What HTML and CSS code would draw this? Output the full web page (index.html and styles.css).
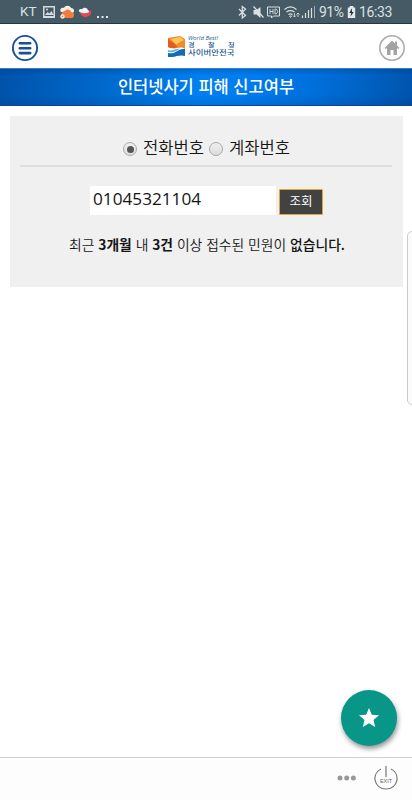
FILE: index.html
```html
<!DOCTYPE html>
<html lang="ko">
<head>
<meta charset="utf-8">
<meta name="viewport" content="width=device-width, initial-scale=1">
<title>인터넷사기 피해 신고여부</title>
<link rel="stylesheet" href="styles.css">
</head>
<body>
<div class="screen">
  <div class="status">
    <span class="carrier">KT</span>
    <svg class="notices" width="90" height="23" viewBox="0 0 90 23">
      <path fill="#d4dce0" fill-rule="evenodd" d="M4 6h12v12H4zM5.500 7.500v8.500h9V7.500zM6 15l2.500-3 2 1.500 2-2.500 2 4z"/>
      <circle cx="8" cy="9.500" r="1" fill="#d4dce0"/>
      <path fill="#f5f0ed" d="M22 12c-2-3 1-5 3-4 1-3 6-3 7 0 3 0 4 3 2 5z"/>
      <path fill="#f37b3d" d="M23 17c-2-4 1-6 3-6 2-3 6-1 6 1 4 0 4 5 1 6h-9z"/>
      <circle cx="23.500" cy="16.500" r="2.200" fill="#e9e7e5"/><circle cx="23.500" cy="16.500" r=".8" fill="#f37b3d"/>
      <path fill="#e64a50" d="M41 13c2-1 4 0 5 0 1-3 4-2 6-2 1 3-2 6-6 6-2 0-4-2-5-4z"/>
      <path fill="#f1f4f5" d="M40 11.500c-1-2 2-3 3-2 1-3 6-2 6 1 2 0 1 2 0 2-2 1-7 1-9-1z"/>
      <path fill="#e6eaec" d="M58 16h2v2h-2zm4.500 0h2v2h-2zm4.500 0h2v2h-2z"/>
    </svg>
    <svg class="signals" width="82" height="23" viewBox="0 0 82 23" fill="none" stroke="#d7e0e4" stroke-width="1.300">
      <path d="M3 9l6.500 6.500-3.200 2.500V6.500L9.500 9 3 15.500"/>
      <path d="M17.500 10h3l4-3v11l-4-3.500h-3z" fill="#d7e0e4" stroke="none"/><path d="M17.500 6.500l10 11"/>
      <path d="M31.500 7h12v9h-6L35.500 18v-2h-4z" stroke-width="1"/>
      <path d="M34 9v5M37 9v5M34 11.500h3M39 9v5c3.500 0 3.500-5 0-5" stroke-width=".9"/>
      <path d="M48.500 9.500c4-3.500 8-3.500 12 0M50.500 12c3-2 5-2 8 0M52.500 14.500c1.500-1 2.500-1 4 0"/>
      <path d="M53.500 16h2l-1 1.500zM58.500 13v4M62 13v4M57 15.500l1.500 1.500 1.500-1.500M60.500 14.500l1.500-1.500 1.500 1.500" stroke-width=".8"/>
      <path d="M66.500 15.500V18M69.500 13v5M72.500 10v8M75.500 8v10" stroke-width="1.200"/><path d="M78.500 6v12" stroke="#a3b1b7" stroke-width="1"/>
    </svg>
    <span class="percent">91%</span>
    <svg class="battery" width="9" height="12" viewBox="0 0 9 13"><path fill="#e4e9eb" d="M2.500 0h4v1.500H8.500V13H.5V1.500h2z"/><path fill="#29363c" d="M5 2.500L2 7.500h2L3.500 11.500 7 6.500H5z"/></svg>
    <span class="clock">16:33</span>
  </div>

  <header class="header">
    <svg class="menu" width="28" height="28" viewBox="0 0 28 28" fill="none" stroke="#174f9b"><circle cx="14" cy="14" r="12.100" stroke-width="1.900"/><path d="M8.800 9.300h10.400M8.800 14.200h10.400M8.800 19.100h10.400" stroke-width="2.600" stroke-linecap="round"/></svg>
    <div class="brand">
      <svg width="19" height="21" viewBox="0 0 19 21">
        <path fill="#f28a27" d="M1 2l12-2 5 3v10C12 9 9 15 1 11z"/>
        <path fill="#ffc45b" d="M4 3l9-2 4 3c-4 2-6 3-8 5z"/>
        <path fill="#e25b22" d="M1 2c2 5 8 4 9 9-4 2-6 1-9 0z"/>
        <path fill="#126cb4" d="M1 17c8 2 9-5 17-4v7c-6-2-11 2-17 1z"/>
        <path fill="#57b9e7" d="M1 14c5 2 7-2 12-1-5 2-6 4-12 3z"/>
      </svg>
      <div class="wordmark"><i>World Best!</i><b class="spread">경 찰 청</b><b>사이버안전국</b></div>
    </div>
    <svg class="home" width="28" height="28" viewBox="0 0 28 28"><circle cx="14" cy="14" r="12.200" fill="none" stroke="#a9a9a9" stroke-width="1.500"/><path fill="#a3a3a3" d="M14 6.500l-7.500 7.500 1 1 1.500-1V21h3.500v-5h3v5H19v-7l1.500 1 1-1-2.500-2.500V7.500h-2v2z"/></svg>
  </header>

  <h1 class="title">인터넷사기 피해 신고여부</h1>

  <main class="content">
    <section class="panel">
      <div class="choices">
        <span class="radio checked"></span><span class="label first">전화번호</span>
        <span class="radio"></span><span class="label">계좌번호</span>
      </div>
      <div class="search"><div class="field">01045321104</div><button class="submit">조회</button></div>
      <p class="message">최근 <b>3개월</b> 내 <b>3건</b> 이상 접수된 민원이 <em>없습니다.</em></p>
    </section>
  </main>

  <div class="edge"></div>
  <div class="fab"><svg width="24" height="24" viewBox="0 0 24 24" fill="#fff"><path d="M12 17.270L18.180 21l-1.640-7.030L22 9.240l-7.190-.61L12 2 9.190 8.630 2 9.240l5.460 4.730L5.820 21z"/></svg></div>

  <footer class="footer">
    <svg class="more" width="20" height="6" viewBox="0 0 20 6" fill="#999"><circle cx="3" cy="3" r="2.500"/><circle cx="9.700" cy="3" r="2.500"/><circle cx="16.400" cy="3" r="2.500"/></svg>
    <svg class="exit" width="24" height="26" viewBox="0 0 24 26"><path d="M7 4C-3 9 0 24 12 24S27 9 17 4M12 1v11" fill="none" stroke="#777" stroke-width="1.200"/><text x="12" y="18.300" text-anchor="middle">EXIT</text></svg>
  </footer>
</div>
</body>
</html>
```

FILE: styles.css
```css
* { box-sizing: border-box; }
body { margin: 0; background: #fff; color: #151515; font-family: "Noto Sans CJK KR", sans-serif; }
.screen { position: relative; display: flex; flex-direction: column; width: 412px; height: 800px; overflow: hidden; }
svg { display: block; flex: none; }

.status { display: flex; align-items: center; height: 24px; background: #455a64; border-bottom: 1px solid #203a43; color: #d9e1e4; font-family: Roboto, sans-serif; font-size: 14px; line-height: 25px; white-space: nowrap; }
.carrier { width: 19px; margin-left: 20px; font-size: 13.5px; }
.signals { margin-left: 107px; }
.percent { width: 27px; margin-left: 1px; padding-top: 1px; font-size: 14px; letter-spacing: -.5px; }
.battery { margin-left: 1px; }
.clock { margin-left: 3px; padding-top: 1px; font-size: 14px; letter-spacing: -.4px; }

.header { display: flex; align-items: center; justify-content: space-between; height: 44px; padding: 3px 6px 0 11px; }
.brand { display: flex; align-items: center; gap: 2px; height: 24px; margin: 0 15px 5px 0; }
.brand > svg { margin-top: 2px; }
.wordmark { display: flex; flex-direction: column; width: 39px; margin-right: 8px; color: #24588e; transform: scaleX(1.2); transform-origin: left; white-space: nowrap; }
.wordmark i { height: 6px; font: italic 5px/6px "Open Sans", sans-serif; }
.wordmark b { height: 8px; font-size: 7px; line-height: 9px; font-weight: 500; }
.wordmark .spread { height: 7px; font-size: 6px; line-height: 7px; word-spacing: 9.500px; }

.title { height: 38px; margin: 0; border-top: 1px solid #377fc5; border-bottom: 1px solid #064993; background: linear-gradient(rgba(0,40,110,.22), rgba(0,40,110,0) 18%, rgba(0,40,110,0) 70%, rgba(0,40,110,.15)), linear-gradient(105deg, #0052a9, #0069cc 26%, #007ff0 48%, #007df0 58%, #006fdb 76%, #0053aa); color: #fff; font-size: 16.500px; font-weight: 500; line-height: 34px; text-align: center; }
.content { flex: 1; padding: 10px 9px 0 10px; }
.panel { height: 171px; padding: 0 11px 0 10px; background: #f0f0f0; }
.choices { display: flex; align-items: center; height: 51px; padding: 13px 0 0 103px; border-bottom: 2px solid #dedede; font-size: 16.600px; font-weight: 350; line-height: 36px; white-space: nowrap; }
.radio { display: flex; align-items: center; justify-content: center; width: 14px; height: 14px; margin: 4px 6px 0 0; border: 1px solid #a9a9a9; border-radius: 50%; background: linear-gradient(#f0f0f0, #ddd); }
.checked::after { content: ""; width: 7px; height: 7px; border-radius: 50%; background: #555; }
.label.first { width: 66px; }
.search { display: flex; align-items: flex-end; gap: 3px; height: 29px; margin: 19px 0 0 70px; }
.field { width: 186px; height: 29px; padding-left: 3px; background: #fff; font: 17.200px/25px "Open Sans", "Noto Sans", sans-serif; }
.submit { width: 44px; height: 26px; padding: 0 0 2px; border: 1px solid #e2a72c; border-radius: 1px; background: #424242; color: #fff; font: 12.500px/22px "Noto Sans CJK KR", sans-serif; }
.message { margin: 18px 0 0 49px; font-size: 13.800px; font-weight: 350; line-height: 22px; white-space: nowrap; }
.message b { font-weight: 700; }
.message em { font-style: normal; font-weight: 500; }

.edge { position: absolute; top: 231px; right: -6px; width: 11px; height: 174px; border: 1px solid #ccc; border-radius: 5px; background: #fbfbfb; }
.fab { position: absolute; left: 341px; top: 690px; display: flex; align-items: center; justify-content: center; width: 56px; height: 56px; border-radius: 50%; background: #079688; box-shadow: 1px 3px 5px rgba(0,0,0,.42); }
.footer { display: flex; align-items: center; justify-content: flex-end; gap: 17px; height: 43px; padding: 0 14px 3px 0; border-top: 1px solid #d0d0d0; background: #fdfdfd; }
.exit text { fill: #666; font: 5.500px "Liberation Sans", sans-serif; }
```
